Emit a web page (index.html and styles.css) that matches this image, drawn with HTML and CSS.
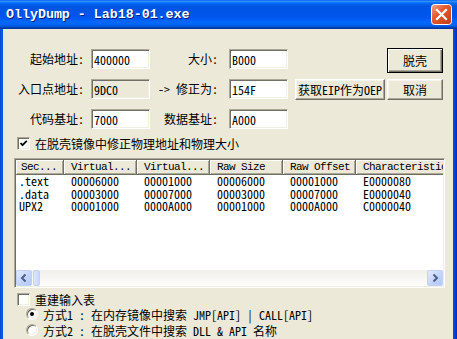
FILE: index.html
```html
<!DOCTYPE html>
<html lang="zh-CN">
<head>
    <meta charset="UTF-8">
    <title>OllyDump - Lab18-01.exe</title>
    <link rel="stylesheet" href="styles.css">
</head>
<body>
<div class="window">
    <!-- title bar -->
    <div class="titlebar">
        <span class="title">OllyDump - Lab18-01.exe</span>
        <span class="close">
            <svg width="21" height="21" viewBox="0 0 21 21">
                <defs>
                    <linearGradient id="closeFill" x1="0" y1="0" x2="1" y2="1">
                        <stop offset="0" stop-color="#F3A88C"/>
                        <stop offset="0.4" stop-color="#E35A31"/>
                        <stop offset="1" stop-color="#C43A12"/>
                    </linearGradient>
                </defs>
                <rect x="0.5" y="0.5" width="20" height="20" rx="3" fill="url(#closeFill)" stroke="#fff"/>
                <path d="M6 6 L15 15 M15 6 L6 15" stroke="#fff" stroke-width="2.2" stroke-linecap="square"/>
            </svg>
        </span>
    </div>

    <div class="client">
        <!-- address fields -->
        <div class="fields">
            <span class="label lbl-main">起始地址:</span>
            <input class="field" value="400000">
            <span class="label lbl-side">大小:</span>
            <input class="field" value="B000">
            <span></span>
            <button class="btn btn-default">脱壳</button>

            <span class="label lbl-main">入口点地址:</span>
            <input class="field readonly" value="9DC0" readonly>
            <span class="label lbl-side">-&gt; 修正为:</span>
            <input class="field" value="154F">
            <button class="btn btn-eip">获取EIP作为OEP</button>
            <button class="btn">取消</button>

            <span class="label lbl-main">代码基址:</span>
            <input class="field" value="7000">
            <span class="label lbl-side">数据基址:</span>
            <input class="field" value="A000">
        </div>

        <div class="check opt-fix">
            <span class="box">
                <svg width="9" height="9" viewBox="0 0 9 9"><polyline points="1.5,4 3.5,6.2 7.8,1.8" fill="none" stroke="#000" stroke-width="1.8"/></svg>
            </span>
            在脱壳镜像中修正物理地址和物理大小
        </div>

        <!-- section list -->
        <div class="list">
            <div class="list-head">
                <span class="hcol c1">Sec...</span>
                <span class="hcol">Virtual...</span>
                <span class="hcol">Virtual...</span>
                <span class="hcol">Raw Size</span>
                <span class="hcol">Raw Offset</span>
                <span class="hcol last">Characteristics</span>
            </div>
            <div class="list-body">
                <div class="row"><span class="c1">.text</span><span>00006000</span><span>00001000</span><span>00006000</span><span>00001000</span><span>E0000080</span></div>
                <div class="row"><span class="c1">.data</span><span>00003000</span><span>00007000</span><span>00003000</span><span>00007000</span><span>E0000040</span></div>
                <div class="row"><span class="c1">UPX2</span><span>00001000</span><span>0000A000</span><span>00001000</span><span>0000A000</span><span>C0000040</span></div>
            </div>
            <div class="hscroll">
                <span class="sb-btn"><svg width="14" height="14" viewBox="0 0 14 14"><path d="M8.5 3.5 L5 7 L8.5 10.5" fill="none" stroke="#4D6185" stroke-width="2"/></svg></span>
                <span class="sb-thumb"></span>
                <span class="sb-track"></span>
                <span class="sb-btn"><svg width="14" height="14" viewBox="0 0 14 14"><path d="M5.5 3.5 L9 7 L5.5 10.5" fill="none" stroke="#4D6185" stroke-width="2"/></svg></span>
            </div>
        </div>

        <div class="check opt-rebuild">
            <span class="box"></span>
            重建输入表
        </div>
        <div class="radio on"><span class="dot"></span>方式1 : 在内存镜像中搜索 JMP[API] | CALL[API]</div>
        <div class="radio"><span class="dot"></span>方式2 : 在脱壳文件中搜索 DLL &amp; API 名称</div>
    </div>
</div>
</body>
</html>
```

FILE: styles.css
```css
* {
    box-sizing: border-box;
}
body {
    margin: 0;
    font-family: "Noto Sans Mono CJK SC", "Noto Sans CJK SC", sans-serif;
    font-size: 12px;
    color: #000;
}
.window {
    width: 457px;
    height: 339px;
    overflow: hidden;
    display: flex;
    flex-direction: column;
    background: linear-gradient(90deg, #0838C8 0, #0A5BEA 1px, #0055E5 3px, #0055E5 453px, #0B45E8 454px, #0030B0 457px);
}
.titlebar {
    height: 29px;
    flex: none;
    display: flex;
    align-items: center;
    padding: 0 5px 0 6px;
    background: linear-gradient(#0058EE 0%, #3593FF 4%, #288EFF 6%, #127DFF 8%, #036FFC 10%, #0262EE 14%, #0057E5 20%, #0054E3 24%, #0055EB 56%, #005BF5 66%, #026AFE 76%, #0062EF 86%, #0052D6 92%, #0040AB 96%, #003092 100%);
}
.title {
    flex: 1;
    font-family: "Liberation Mono", monospace;
    font-weight: bold;
    font-size: 13.3px;
    color: #fff;
    text-shadow: 1px 1px #0A1883;
}
.close {
    width: 21px;
    height: 21px;
}
.client {
    flex: 1;
    margin: 0 4px 0 3px;
    background: #ECE9D8;
    padding-top: 20px;
}

/* fields */
.fields {
    display: grid;
    grid-template-columns: 88px 59px 79px 59px 99px 56px;
    grid-template-rows: 30px 30px 20px;
    align-items: start;
}
.label {
    text-align: right;
    line-height: 20px;
    white-space: nowrap;
}
.lbl-main {
    padding-right: 7px;
}
.lbl-side {
    padding-right: 11px;
}
.field {
    width: 59px;
    height: 20px;
    padding: 0 2px;
    font: inherit;
    background: #fff;
    border: 1px solid;
    border-color: #ACA899 #fff #fff #ACA899;
    box-shadow: inset 1px 1px #716F64, inset -1px -1px #F1EFE2;
    outline: none;
}
.field.readonly {
    background: #ECE9D8;
}
.btn {
    width: 56px;
    height: 21px;
    padding: 0;
    font: inherit;
    background: #ECE9D8;
    border: 1px solid;
    border-color: #fff #716F64 #716F64 #fff;
    box-shadow: inset -1px -1px #ACA899, inset 1px 1px #F5F4EE;
    white-space: nowrap;
}
.btn-eip {
    width: 90px;
    margin-left: 7px;
}
.btn-default {
    height: 25px;
    margin-top: -1px;
    border-color: #000;
    box-shadow: inset 1px 1px #fff, inset -1px -1px #716F64, inset -2px -2px #ACA899;
}

/* check boxes */
.check {
    display: flex;
    align-items: center;
    gap: 5px;
    height: 13px;
    line-height: 13px;
    margin-left: 14px;
}
.opt-fix {
    margin-top: 8px;
}
.opt-rebuild {
    margin-top: 5px;
}
.box {
    width: 13px;
    height: 13px;
    flex: none;
    display: flex;
    align-items: center;
    justify-content: center;
    background: #fff;
    border: 1px solid;
    border-color: #ACA899 #fff #fff #ACA899;
    box-shadow: inset 1px 1px #716F64, inset -1px -1px #F1EFE2;
}

/* list view */
.list {
    margin: 8px 0 0 11px;
    width: 431px;
    height: 130px;
    padding: 1px;
    display: flex;
    flex-direction: column;
    background: #fff;
    border: 1px solid;
    border-color: #ACA899 #fff #fff #ACA899;
    box-shadow: inset 1px 1px #716F64, inset -1px -1px #F1EFE2;
}
.list-head {
    height: 15px;
    flex: none;
    display: flex;
    overflow: hidden;
    background: #ECE9D8;
}
.hcol {
    flex: none;
    width: 73px;
    padding-left: 7px;
    font-family: "Liberation Mono", monospace;
    font-size: 11px;
    letter-spacing: -0.6px;
    line-height: 14px;
    white-space: nowrap;
    border-right: 1px solid #716F64;
    border-bottom: 1px solid #716F64;
    box-shadow: inset 1px 1px #fff, inset -1px -1px #ACA899;
}
.hcol.c1 {
    width: 48px;
    padding-left: 5px;
}
.hcol.last {
    width: 100px;
}
.list-body {
    flex: 1;
}
.row {
    display: flex;
    height: 12.5px;
    line-height: 12.5px;
    white-space: nowrap;
}
.row span {
    flex: none;
    width: 73px;
    padding-left: 7px;
}
.row .c1 {
    width: 48px;
    padding-left: 3px;
}
.hscroll {
    height: 16px;
    flex: none;
    display: flex;
    background: linear-gradient(#F1F0EA, #FDFDFB);
}
.sb-btn {
    width: 16px;
    height: 16px;
    flex: none;
    display: flex;
    align-items: center;
    justify-content: center;
    border: 1px solid #C2D1F7;
    border-radius: 2px;
    background: linear-gradient(135deg, #E2EBFE, #C1D3FB 60%, #B4C8F6);
}
.sb-thumb {
    width: 7px;
    margin-left: 1px;
    flex: none;
    border: 1px solid #C2D1F7;
    border-radius: 2px;
    background: linear-gradient(90deg, #DDE7FE, #C6D6FC);
}
.sb-track {
    flex: 1;
}

/* radio options */
.radio {
    display: flex;
    align-items: center;
    gap: 5px;
    height: 16px;
    margin-left: 23px;
    white-space: pre;
}
.dot {
    width: 12px;
    height: 12px;
    flex: none;
    display: flex;
    align-items: center;
    justify-content: center;
    border-radius: 50%;
    background: #fff;
    border: 1px solid;
    border-color: #ACA899 #fff #fff #ACA899;
    box-shadow: inset 1px 1px #716F64, inset -1px -1px #F1EFE2;
}
.radio.on .dot::after {
    content: "";
    width: 4px;
    height: 4px;
    border-radius: 50%;
    background: #000;
}
```
